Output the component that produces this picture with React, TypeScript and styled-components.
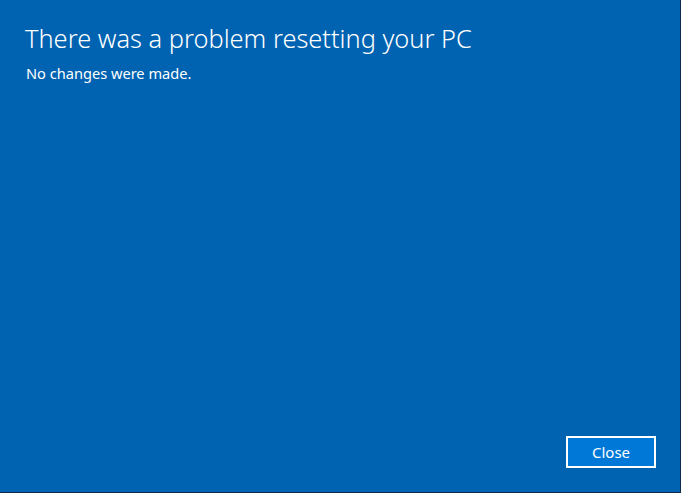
import React from 'react';
import styled, { createGlobalStyle } from 'styled-components';

const GlobalStyle = createGlobalStyle`
  html, body {
    margin: 0;
    padding: 0;
    background: #0063b1;
  }
`;

const App = () => (
  <>
    <GlobalStyle />
    <Window>
      <Content>
        <Title>There was a problem resetting your PC</Title>
        <Message>No changes were made.</Message>
      </Content>
      <Footer>
        <Button type="button">Close</Button>
      </Footer>
    </Window>
  </>
);

export default App;

const Window = styled.div`
  box-sizing: border-box;
  width: 681px;
  height: 493px;
  display: flex;
  flex-direction: column;
  background: #0063b1;
  border-right: 1px solid #0d2b4a;
  border-bottom: 1px solid #0d2b4a;
  font-family: 'Noto Sans', 'Open Sans', sans-serif;
  color: #ffffff;
`;

const Content = styled.div`
  flex: 1;
  padding: 21px 0 0 25px;
`;

const Title = styled.h1`
  margin: 0;
  font-size: 25.4px;
  font-weight: 300;
  line-height: 34px;
`;

const Message = styled.p`
  margin: 8px 0 0 1px;
  font-size: 14.6px;
  line-height: 20px;
`;

const Footer = styled.div`
  display: flex;
  justify-content: flex-end;
  padding: 0 24px 24px 0;
`;

const Button = styled.button`
  box-sizing: border-box;
  width: 90px;
  height: 32px;
  border: 2px solid #ffffff;
  background: #0078d7;
  color: #ffffff;
  font-family: inherit;
  font-size: 15px;
  padding: 0;
  cursor: pointer;
`;
